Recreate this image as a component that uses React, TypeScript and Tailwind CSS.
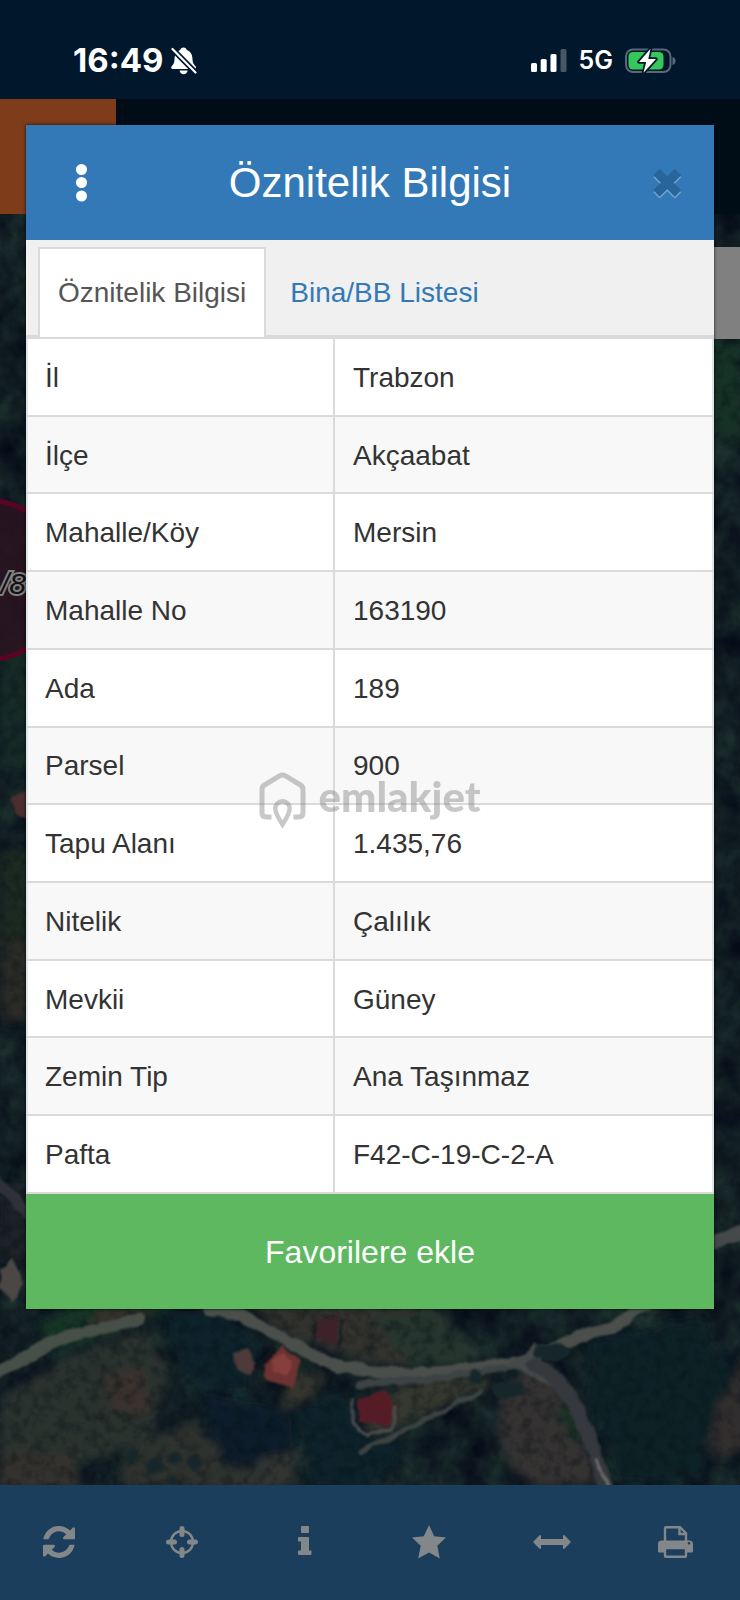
import { useState } from "react";

type Row = {
  label: string;
  value: string;
};

const rows: Row[] = [
  { label: "İl", value: "Trabzon" },
  { label: "İlçe", value: "Akçaabat" },
  { label: "Mahalle/Köy", value: "Mersin" },
  { label: "Mahalle No", value: "163190" },
  { label: "Ada", value: "189" },
  { label: "Parsel", value: "900" },
  { label: "Tapu Alanı", value: "1.435,76" },
  { label: "Nitelik", value: "Çalılık" },
  { label: "Mevkii", value: "Güney" },
  { label: "Zemin Tip", value: "Ana Taşınmaz" },
  { label: "Pafta", value: "F42-C-19-C-2-A" },
];

const tabs = ["Öznitelik Bilgisi", "Bina/BB Listesi"];

function StatusBar() {
  return (
    <div className="flex h-[99px] items-center justify-between bg-[#01172c] pt-[22px] pr-16 pl-[73px] font-['Inter',sans-serif] text-white">
      <div className="flex items-center gap-2">
        <span className="text-[33px] font-bold">16:49</span>
        <svg width="26" height="28" viewBox="0 0 26 28" fill="currentColor">
          <path d="M12.500.5c1.800 0 3 1 3.300 2.400 3.600 1.200 5.400 4.200 5.600 8.100.2 4.500 1 6 2.900 7.900 1.200 1.300.9 3-.7 3H1.600c-1.600 0-1.900-1.700-.7-3 1.900-1.900 2.500-3.400 2.700-7.900.2-3.900 2-6.900 5.600-8.100C9.500 1.500 10.700.5 12.500.5z" />
          <path d="M8.500 23.500h8.200c-.4 2.300-2.100 3.700-4.100 3.700s-3.700-1.400-4.100-3.700z" />
          <path d="M-1-.5 26 27" stroke="#01172c" strokeWidth="5.500" />
          <path
            d="M1.500 2 24.500 25.500"
            stroke="currentColor"
            strokeWidth="2.200"
            strokeLinecap="round"
          />
        </svg>
      </div>

      <div className="flex items-center gap-3">
        <svg width="36" height="24" viewBox="0 0 36 24" fill="currentColor">
          <rect x="0" y="14" width="6" height="9" rx="1.500" />
          <rect x="9.700" y="10" width="6" height="13" rx="1.500" />
          <rect x="19.500" y="5" width="6" height="18" rx="1.500" />
          <rect x="29.500" y="0" width="6" height="23" rx="1.500" opacity=".28" />
        </svg>
        <span className="text-[25px] font-semibold">5G</span>
        <svg width="51" height="26" viewBox="0 0 51 26">
          <rect
            x="1"
            y="1.500"
            width="44.500"
            height="22.500"
            rx="7"
            fill="none"
            stroke="#5b6977"
            strokeWidth="2"
          />
          <path d="M47.500 9c2 .5 3 2 3 4s-1 3.500-3 4z" fill="#5b6977" />
          <rect x="3.500" y="4" width="35" height="17.500" rx="4.500" fill="#35c759" />
          <path
            d="M25.500.8 14 14h7.200l-2.700 10.800L31 11h-7.700z"
            fill="#fff"
            stroke="#01172c"
            strokeWidth="3.500"
            strokeLinejoin="round"
            paintOrder="stroke"
          />
        </svg>
      </div>
    </div>
  );
}

function SatelliteMap() {
  return (
    <svg
      className="absolute inset-0 h-full w-full"
      viewBox="0 214 740 1271"
      preserveAspectRatio="xMidYMid slice"
      aria-hidden="true"
    >
      <defs>
        <filter
          id="forest"
          x="0"
          y="0"
          width="100%"
          height="100%"
          colorInterpolationFilters="sRGB"
        >
          <feTurbulence type="fractalNoise" baseFrequency=".035 .03" numOctaves="4" seed="7" />
          <feColorMatrix values=".14 0 0 0 0  .22 0 0 0 .01  .12 0 0 0 .08  0 0 0 0 1" />
        </filter>
        <filter
          id="grain"
          x="0"
          y="0"
          width="100%"
          height="100%"
          colorInterpolationFilters="sRGB"
        >
          <feTurbulence type="fractalNoise" baseFrequency=".09" numOctaves="3" seed="21" />
          <feColorMatrix values="0 0 0 0 .02  0 0 0 0 .06  0 0 0 0 .08  2 0 0 0 -.85" />
        </filter>
        <filter id="rough" x="-10%" y="-10%" width="120%" height="120%">
          <feTurbulence type="fractalNoise" baseFrequency=".05" numOctaves="2" seed="4" />
          <feDisplacementMap
            in="SourceGraphic"
            scale="14"
            xChannelSelector="R"
            yChannelSelector="G"
          />
          <feGaussianBlur stdDeviation="4" />
        </filter>
        <filter id="soft" x="-10%" y="-10%" width="120%" height="120%">
          <feTurbulence type="fractalNoise" baseFrequency=".06" numOctaves="2" seed="9" />
          <feDisplacementMap
            in="SourceGraphic"
            scale="7"
            xChannelSelector="R"
            yChannelSelector="G"
          />
          <feGaussianBlur stdDeviation="1.200" />
        </filter>
      </defs>

      <rect y="214" width="740" height="1271" filter="url(#forest)" />

      <g filter="url(#rough)">
        {/* fields */}
        <path d="M0 640h40v130H0z" fill="#152c26" />
        <path d="M0 850h40v170H0z" fill="#1f2922" />
        <path d="M0 940h40v80H0z" fill="#292a25" />
        <path d="M0 1190h40v70H0z" fill="#1c2327" />
        <path d="M705 340h40v110l-40-20z" fill="#163328" />
        <path d="M40 1320 80 1305h100l-50 22-80 26z" fill="#173425" />
        <path d="M85 1330 100 1305h60l-20 16z" fill="#34312c" />
        <path d="M0 1400l60-40 80-30 30 40-20 70-60 20-90 30z" fill="#2b322d" />
        <path d="M0 1455h70l10 35H0z" fill="#35312f" />
        <path d="M105 1375l40-10 5 50-40-6z" fill="#3b302e" />
        <path d="M130 1450l60-30 40 40 60 30H120z" fill="#2f332f" />
        <path d="M240 1300h190l60 60-110 6-90-28z" fill="#30332f" />
        <path d="M370 1320l70-10 50 50-70 8z" fill="#25352d" />
        <path d="M240 1485l40-60 20 30-5 30z" fill="#303432" />
        <path d="M290 1375l40-5-20 30-30 10z" fill="#36352f" />
        <path d="M500 1390l45-30 30 35 24 90h-70l-30-40z" fill="#343231" />
        <path d="M555 1410l20-4 15 30-15 10z" fill="#1a3128" />
        <path d="M375 1395l80-22 40 8-60 30-70 30z" fill="#34382f" />
        {/* dense woods */}
        <path d="M165 1312l60-4 30 36-10 50-50-10-20-30z" fill="#0f202a" />
        <path d="M195 1390l90 20 10 40-70 20z" fill="#0f1f29" />
        <path d="M295 1410l55-20 10 40 40 20-30 35h-60z" fill="#10232b" />
        <path d="M590 1340l110-20 30 50-30 110h-80l-30-80z" fill="#0e2028" />
        <path d="M745 1355l-20 30-15 40 5 35 30-14z" fill="#332e2d" />
      </g>

      <rect y="214" width="740" height="1271" filter="url(#grain)" opacity=".5" />

      <g filter="url(#soft)" fill="none" strokeLinecap="round">
        {/* roads */}
        <path d="M-10 1374C20 1366 40 1344 75 1334L138 1320" stroke="#465048" strokeWidth="13" />
        <path
          d="M210 1309c50 6 70 34 120 54 50 16 110 12 180 0 60-18 50-24 100-34 15-6 20-22 60-38"
          stroke="#4b504c"
          strokeWidth="12"
        />
        <path d="M360 1384 440 1378 500 1368 530 1362" stroke="#3e4344" strokeWidth="7" />
        <path d="M505 1364l30-20 20 44z" fill="#454a48" />
        <path d="M535 1365c40 20 50 60 72 126" stroke="#34383c" strokeWidth="15" />
        <path d="M596 1462 608 1485" stroke="#6a6f6b" strokeWidth="3" />
        <path d="M360 1452 420 1422 480 1392" stroke="#3c4342" strokeWidth="5" />
        <path d="M715 1242 745 1230" stroke="#454a4b" strokeWidth="14" />
        <path d="M-5 1180 30 1215" stroke="#2d3338" strokeWidth="10" />
      </g>

      <g filter="url(#soft)">
        {/* orchard trees and bushes */}
        <g fill="#142829">
          <circle cx="132" cy="1455" r="6" />
          <circle cx="154" cy="1466" r="8" />
          <circle cx="175" cy="1457" r="6" />
          <circle cx="195" cy="1462" r="7" />
          <circle cx="172" cy="1480" r="5" />
          <ellipse cx="552" cy="1352" rx="18" ry="9" />
          <circle cx="476" cy="1376" r="7" />
          <ellipse cx="508" cy="1390" rx="16" ry="9" />
        </g>

        {/* houses */}
        <path d="M264 1360l18-14 18 14-6 28-28-8z" fill="#6d3331" />
        <path d="M272 1360l12-8 8 8-4 14-14-2z" fill="#86403a" />
        <path d="M234 1352l14-4 10 20-8 8-14-8z" fill="#4e3a3a" />
        <path d="M256 1370 274 1350" stroke="#10141a" strokeWidth="6" />
        <path d="M318 1320l22-4-5 28-20-4z" fill="#3d222a" />
        <path d="M311 1344 318 1322M337 1346l6-24" stroke="#161c20" strokeWidth="3" />
        <path d="M358 1400l26-10 12 18-8 18-28-4z" fill="#541c27" />
        <path
          d="M353 1398v26l14 12 26-8 4-22"
          fill="none"
          stroke="#4d4c4e"
          strokeWidth="3"
        />
        <path d="M12 796l26-10v42l-22-14z" fill="#4c2f2d" />
        <path d="M0 1270l12-12 12 24-10 20-14-14z" fill="#4b4745" />
      </g>

      {/* selected parcel */}
      <ellipse
        cx="-14"
        cy="580"
        rx="80"
        ry="80"
        fill="#2a1420"
        fillOpacity=".85"
        stroke="#5a0422"
        strokeWidth="5"
      />
      <text
        x="1"
        y="594"
        fontFamily="Liberation Sans, sans-serif"
        fontSize="30"
        fontStyle="italic"
        fill="#111"
        stroke="#808080"
        strokeWidth="4"
        paintOrder="stroke"
      >
        /8
      </text>
    </svg>
  );
}

function Toolbar() {
  return (
    <nav className="grid h-[115px] grid-cols-6 bg-[#1b3e5c] text-[#848789]">
      <button aria-label="Yenile" className="flex items-center justify-center pr-1.5 pb-0.5">
        <svg width="32" height="32" viewBox="0 0 1536 1536" fill="currentColor">
          <path d="M1511 928q0 5-1 7-64 268-268 434.500t-478 166.500q-146 0-282.500-55t-243.500-157l-129 129q-19 19-45 19t-45-19-19-45v-448q0-26 19-45t45-19h448q26 0 45 19t19 45-19 45l-137 137q71 66 161 102t187 36q134 0 250-65t186-179q11-17 53-117 8-23 30-23h192q13 0 22.500 9.500t9.500 22.500zm25-800v448q0 26-19 45t-45 19h-448q-26 0-45-19t-19-45 19-45l138-138q-148-137-349-137-134 0-250 65t-186 179q-11 17-53 117-8 23-30 23h-199q-13 0-22.500-9.500t-9.500-22.500v-7q65-268 270-434.500t480-166.500q146 0 284 55.500t245 156.500l130-129q19-19 45-19t45 19 19 45z" />
        </svg>
      </button>
      <button aria-label="Konum" className="flex items-center justify-center pr-1.5 pb-0.5">
        <svg width="32" height="32" viewBox="0 0 32 32" fill="none" stroke="currentColor">
          <circle cx="16" cy="16" r="11" strokeWidth="2.500" />
          <path
            d="M16 2.500v6M16 23.500v6M2.500 16h6M23.500 16h6"
            strokeWidth="5"
            strokeLinecap="round"
          />
        </svg>
      </button>
      <button aria-label="Bilgi" className="flex items-center justify-center pr-1.5 pb-0.5">
        <svg width="14" height="32" viewBox="0 0 14 32" fill="currentColor">
          <rect x="3" y="0" width="8" height="7" rx="1" />
          <path d="M1 11h9a1 1 0 0 1 1 1v12.500h1.500a1 1 0 0 1 1 1V28a1 1 0 0 1-1 1H1a1 1 0 0 1-1-1v-2.500a1 1 0 0 1 1-1h2v-9H1a1 1 0 0 1-1-1V12a1 1 0 0 1 1-1z" />
        </svg>
      </button>
      <button aria-label="Favoriler" className="flex items-center justify-center pr-1.5 pb-0.5">
        <svg width="34" height="34" viewBox="0 0 34 34" fill="currentColor">
          <path d="M17 0l5.200 11.300L34 12.600l-8.700 8.200 2.500 12.700L17 27.500 6.200 33.500l2.500-12.700L0 12.600l11.800-1.300z" />
        </svg>
      </button>
      <button aria-label="Ölçüm" className="flex items-center justify-center pr-1.5 pb-0.5">
        <svg width="38" height="14" viewBox="0 0 38 14" fill="currentColor">
          <path d="M8 .8V4h22V.8c0-.8.8-1 1.400-.5l5.900 6c.4.400.4 1 0 1.400l-5.900 6c-.6.500-1.400.300-1.400-.5V10H8v3.200c0 .8-.8 1-1.400.5l-5.900-6a1 1 0 0 1 0-1.400l5.900-6C7.200-.2 8 0 8 .8z" />
        </svg>
      </button>
      <button aria-label="Yazdır" className="flex items-center justify-center pr-1.5 pb-0.5">
        <svg width="35" height="32" viewBox="0 0 35 32" fill="none" stroke="currentColor">
          <path d="M7 17V2.200a1 1 0 0 1 1-1h14l6 6V17" strokeWidth="2.400" />
          <path d="M21.500 1v7h7" strokeWidth="2.400" />
          <path
            fill="currentColor"
            stroke="none"
            fillRule="evenodd"
            d="M3.500 14.500h28A3.500 3.500 0 0 1 35 18v7.500a1 1 0 0 1-1 1h-5v-3.300H6v3.300H1a1 1 0 0 1-1-1V18a3.500 3.500 0 0 1 3.500-3.500zM31 16a1.300 1.300 0 1 0 0 2.600 1.300 1.300 0 0 0 0-2.600z"
          />
          <path d="M7 23v6.800a1 1 0 0 0 1 1h19a1 1 0 0 0 1-1V23" strokeWidth="2.400" />
        </svg>
      </button>
    </nav>
  );
}

function AttributeDialog() {
  const [active, setActive] = useState(0);

  return (
    <section
      role="dialog"
      aria-labelledby="dialog-title"
      className="absolute inset-x-[26px] top-[125px] bg-white shadow-[0_0_3px_rgba(0,0,0,0.8)]"
    >
      <header className="grid h-[115px] grid-cols-[1fr_auto_1fr] items-center bg-[#3379b7] text-white">
        <button aria-label="Menü" className="justify-self-start pl-[50px]">
          <svg width="11" height="38" viewBox="0 0 11 38" fill="currentColor">
            <circle cx="5.500" cy="5.500" r="5.500" />
            <circle cx="5.500" cy="18.500" r="5.500" />
            <circle cx="5.500" cy="32" r="5.500" />
          </svg>
        </button>
        <h1 id="dialog-title" className="text-[42px]">
          Öznitelik Bilgisi
        </h1>
        <button aria-label="Kapat" className="justify-self-end pr-8">
          <svg width="29" height="30" viewBox="0 0 29 30" fill="none">
            <path d="M3.500 6l21.500 21.500M25 6L3.500 27.500" stroke="#75a6cf" strokeWidth="9" />
            <path d="M3.500 4l21.500 21.500M25 4L3.500 25.500" stroke="#28659b" strokeWidth="9" />
          </svg>
        </button>
      </header>

      <div
        role="tablist"
        className="flex h-[97px] items-end gap-1 border-b-2 border-[#dadada] bg-[#f0f0f0] pl-3 text-[28px]"
      >
        {tabs.map((tab, index) => (
          <button
            key={tab}
            role="tab"
            aria-selected={active === index}
            onClick={() => setActive(index)}
            className={
              active === index
                ? "-mb-0.5 h-[90px] border-2 border-b-0 border-[#dadada] bg-white px-[18px] text-[#555]"
                : "-mb-0.5 h-[90px] border-2 border-b-0 border-transparent px-[18px] text-[#3379b7]"
            }
          >
            {tab}
          </button>
        ))}
      </div>

      <table className="h-[857px] w-full border-collapse border-x-2 border-[#dfe6ea] text-left text-[28px] leading-10 text-[#333]">
        <tbody>
          {rows.map((row) => (
            <tr key={row.label} className="border-y-2 border-[#dadada] even:bg-[#f8f8f8]">
              <th
                scope="row"
                className="w-[307px] border-r-2 border-[#dadada] pt-0.5 pl-[17px] font-normal"
              >
                {row.label}
              </th>
              <td className="pt-0.5 pl-[18px]">{row.value}</td>
            </tr>
          ))}
        </tbody>
      </table>

      <button className="block h-[115px] w-full bg-[#5eb85f] text-[32px] text-white">
        Favorilere ekle
      </button>
    </section>
  );
}

function Watermark() {
  return (
    <div className="pointer-events-none absolute inset-0 flex items-center justify-center gap-3 text-[#777] opacity-40">
      <svg width="47" height="57" viewBox="0 0 47 57" fill="none" stroke="currentColor">
        <path
          d="M12.500 45H7.500Q3 45 3 40.500V17.500Q3 14.500 5.500 13L20.500 4Q23.500 2 26.500 4L41.500 13Q44 14.500 44 17.500v23Q44 45 39.500 45H34.500"
          strokeWidth="5"
        />
        <path
          d="M23.500 52.500C19.500 46 16.300 41.500 16.300 36.500a7.200 7.200 0 0 1 14.400 0c0 5-3.200 9.500-7.200 16z"
          strokeWidth="4.500"
        />
      </svg>
      <span className="pb-2 font-['Lato',sans-serif] text-[42px] leading-none font-black">
        emlakjet
      </span>
    </div>
  );
}

export default function App() {
  return (
    <main className="relative flex min-h-screen flex-col overflow-hidden bg-[#000d17] font-['Liberation_Sans',Arial,sans-serif]">
      <StatusBar />

      <div className="h-[115px]">
        <div className="h-full w-[116px] bg-[#7e3c1b]" />
      </div>

      <div className="relative flex-1 overflow-hidden">
        <SatelliteMap />
        <div className="absolute top-[33px] right-0 h-[92px] w-20 bg-[#808080]" />
      </div>

      <Toolbar />
      <AttributeDialog />
      <Watermark />
    </main>
  );
}
